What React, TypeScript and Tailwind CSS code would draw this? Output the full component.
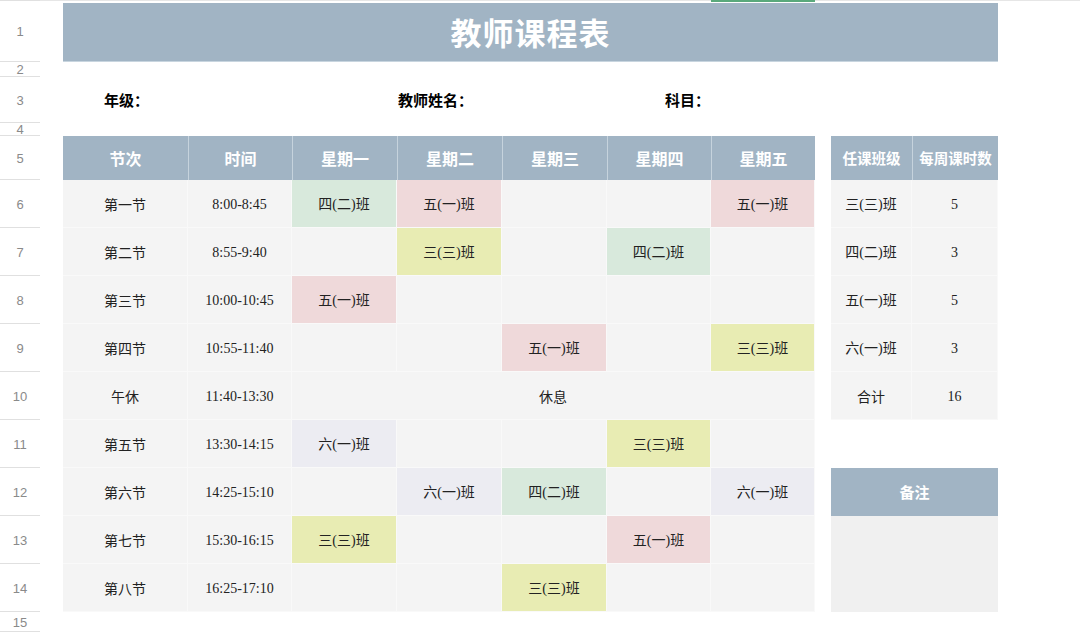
import React from 'react';

const G = 'bg-[#d8e9dc]';
const P = 'bg-[#efd9da]';
const Y = 'bg-[#e8ecb3]';
const L = 'bg-[#ececf2]';
const N = 'bg-[#f4f4f4]';

type D = [string, string] | null;

const rows: { n: string; t: string; d: D[] | 'rest' }[] = [
  { n: '第一节', t: '8:00-8:45', d: [['四(二)班', G], ['五(一)班', P], null, null, ['五(一)班', P]] },
  { n: '第二节', t: '8:55-9:40', d: [null, ['三(三)班', Y], null, ['四(二)班', G], null] },
  { n: '第三节', t: '10:00-10:45', d: [['五(一)班', P], null, null, null, null] },
  { n: '第四节', t: '10:55-11:40', d: [null, null, ['五(一)班', P], null, ['三(三)班', Y]] },
  { n: '午休', t: '11:40-13:30', d: 'rest' },
  { n: '第五节', t: '13:30-14:15', d: [['六(一)班', L], null, null, ['三(三)班', Y], null] },
  { n: '第六节', t: '14:25-15:10', d: [null, ['六(一)班', L], ['四(二)班', G], null, ['六(一)班', L]] },
  { n: '第七节', t: '15:30-16:15', d: [['三(三)班', Y], null, null, ['五(一)班', P], null] },
  { n: '第八节', t: '16:25-17:10', d: [null, null, ['三(三)班', Y], null, null] },
];

const RS = ['row-start-7', 'row-start-8', 'row-start-9', 'row-start-10', 'row-start-11', 'row-start-12', 'row-start-13', 'row-start-14', 'row-start-15'];
const CS = ['col-start-5', 'col-start-6', 'col-start-7', 'col-start-8', 'col-start-9'];
const RN = ['row-start-3', 'row-start-4', 'row-start-5', 'row-start-6', 'row-start-7', 'row-start-8', 'row-start-9', 'row-start-10', 'row-start-11', 'row-start-12', 'row-start-13', 'row-start-14', 'row-start-15', 'row-start-16'];

const sans = "font-['Noto_Sans_CJK_SC','Noto_Sans',sans-serif]";
const serif = "font-['Liberation_Serif','Noto_Sans_CJK_SC',serif]";
const head = 'bg-[#a1b4c4] text-white font-bold flex items-center justify-center';
const body = 'flex items-center justify-center pt-[2px] text-[14px] text-[#222] border-b border-r border-[#f9f9f9]';

const summary: [string, string][] = [
  ['三(三)班', '5'],
  ['四(二)班', '3'],
  ['五(一)班', '5'],
  ['六(一)班', '3'],
];

export default function App() {
  return (
    <div className={`w-[1080px] h-[635px] bg-white overflow-hidden grid grid-cols-[40px_23px_125px_104px_105px_105px_105px_104px_104px_16px_81px_86px_1fr] grid-rows-[3px_59px_15px_46px_13px_44px_repeat(9,48px)_20px_1fr] ${sans}`}>
      {/* top strip */}
      <div className="col-start-2 col-span-12 row-start-1 border-t border-[#e6e6e6]" />
      <div className="col-start-9 row-start-1 bg-[#5aa97c] h-[2px]" />

      {/* row numbers */}
      <div className="col-start-1 row-start-1 row-span-2 border-t border-b border-[#e0e0e0] flex items-center justify-center pt-[2px] text-[13px] text-[#8a8a8a] font-['Liberation_Sans',sans-serif]">1</div>
      {RN.map((r, i) => (
        <div key={r} className={`col-start-1 ${r} border-b border-[#e0e0e0] flex items-center justify-center pt-[2px] text-[13px] text-[#8a8a8a] font-['Liberation_Sans',sans-serif]`}>
          {i + 2}
        </div>
      ))}

      {/* title */}
      <div className={`col-start-3 col-span-10 row-start-2 ${head} text-[31px] tracking-[1px] border-b border-[#c8d5df]`}>教师课程表</div>

      {/* info labels */}
      <div className="col-start-3 col-span-10 row-start-4 flex items-center text-[15px] font-bold text-black">
        <span className="ml-[41px]">年级：</span>
        <span className="ml-[249px]">教师姓名：</span>
        <span className="ml-[192px]">科目：</span>
      </div>

      {/* header */}
      <div className={`col-start-3 row-start-6 ${head} text-[16px]`}>节次</div>
      <div className={`col-start-4 row-start-6 ${head} text-[16px] border-l border-[#c6d3dd]`}>时间</div>
      {['星期一', '星期二', '星期三', '星期四', '星期五'].map((d, i) => (
        <div key={d} className={`${CS[i]} row-start-6 ${head} text-[16px] border-l border-[#c6d3dd]`}>{d}</div>
      ))}
      <div className={`col-start-11 row-start-6 ${head} text-[14.5px]`}>任课班级</div>
      <div className={`col-start-12 row-start-6 ${head} text-[14.5px] border-l border-[#c6d3dd]`}>每周课时数</div>

      {/* body */}
      {rows.map((r, i) => (
        <React.Fragment key={r.n}>
          <div className={`col-start-3 ${RS[i]} ${body} ${N}`}>{r.n}</div>
          <div className={`col-start-4 ${RS[i]} ${body} ${N} ${serif}`}>{r.t}</div>
          {r.d === 'rest' ? (
            <div className={`col-start-5 col-span-5 ${RS[i]} ${body} ${N}`}>休息</div>
          ) : (
            r.d.map((c, j) => (
              <div key={j} className={`${CS[j]} ${RS[i]} ${body} ${serif} ${c ? c[1] : N}`}>{c ? c[0] : ''}</div>
            ))
          )}
        </React.Fragment>
      ))}

      {/* summary */}
      {summary.map((s, i) => (
        <React.Fragment key={s[0]}>
          <div className={`col-start-11 ${RS[i]} ${body} ${N} ${serif}`}>{s[0]}</div>
          <div className={`col-start-12 ${RS[i]} ${body} ${N} ${serif}`}>{s[1]}</div>
        </React.Fragment>
      ))}
      <div className={`col-start-11 row-start-11 ${body} ${N}`}>合计</div>
      <div className={`col-start-12 row-start-11 ${body} ${N} ${serif}`}>16</div>

      {/* notes */}
      <div className={`col-start-11 col-span-2 row-start-13 ${head} text-[15px]`}>备注</div>
      <div className="col-start-11 col-span-2 row-start-14 row-span-2 bg-[#f0f0f0]" />
    </div>
  );
}
